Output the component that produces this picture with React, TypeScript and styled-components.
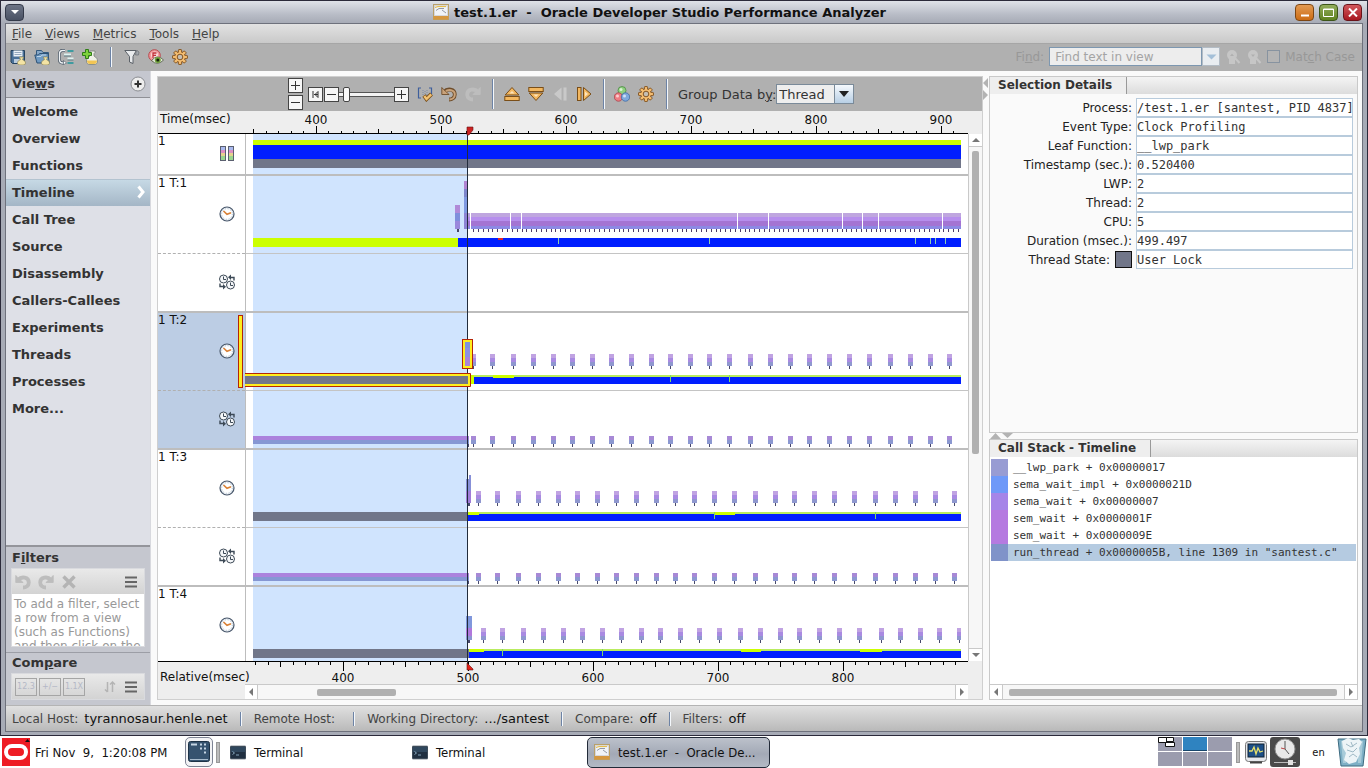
import React from "react";
import styled, { createGlobalStyle } from "styled-components";

const sans = `"DejaVu Sans", sans-serif`;
const mono = `"DejaVu Sans Mono", monospace`;
const condensed = `"DejaVu Sans Condensed", "DejaVu Sans", sans-serif`;

const GlobalStyle = createGlobalStyle`
  * { box-sizing: border-box; }
  body { margin: 0; background: #fff; font-family: ${sans}; font-size: 12px; color: #333; }
  button, input, select { font: inherit; color: inherit; margin: 0; }
  h1, h2, ul, dl { margin: 0; padding: 0; font-size: inherit; }
  ul { list-style: none; }
  svg { display: block; }
`;

/* ---------- window frame ---------- */

const Screen = styled.div`
  display: flex;
  flex-direction: column;
  height: 100vh;
  overflow: hidden;
`;

const Window = styled.div`
  flex: 1;
  min-height: 0;
  display: flex;
  flex-direction: column;
  background: #a7abb6;
  border: 1px solid #2b2a3a;
  padding-bottom: 3px;
`;

const TitleBar = styled.header`
  display: flex;
  align-items: center;
  justify-content: space-between;
  height: 22px;
  padding: 0 5px 0 4px;
  background: linear-gradient(#dfe2e8, #b9bdc7 60%, #a7abb6);
`;

const Title = styled.h1`
  display: flex;
  align-items: center;
  gap: 5px;
  font-size: 13px;
  font-weight: bold;
  color: #111;
  white-space: pre;
`;

const FrameButtons = styled.div`
  display: flex;
  gap: 5px;
`;

const FrameButton = styled.button<{ $tone: string; $edge: string }>`
  display: flex;
  align-items: center;
  justify-content: center;
  width: 19px;
  height: 17px;
  padding: 0;
  border: 1px solid ${(p) => p.$edge};
  border-radius: 4px;
  background: ${(p) => p.$tone};
`;

const Client = styled.div`
  flex: 1;
  min-height: 0;
  display: flex;
  flex-direction: column;
  margin: 0 4px;
  border: 1px solid #6e717c;
  background: #fafafa;
`;

const MenuBar = styled.nav`
  display: flex;
  align-items: center;
  gap: 13px;
  height: 20px;
  padding: 0 6px;
  background: linear-gradient(#e2e2e2, #c9c9c9);
  border-bottom: 1px solid #a6a6a6;
  color: #444;
`;

const MenuItem = styled.button`
  padding: 0;
  border: 0;
  background: none;
`;

const ToolBar = styled.div`
  display: flex;
  align-items: center;
  justify-content: space-between;
  height: 27px;
  padding: 0 7px 2px 4px;
  background: #b0b0b0;
`;

const ToolGroup = styled.div<{ $gap: number }>`
  display: flex;
  align-items: center;
  gap: ${(p) => p.$gap}px;
`;

const IconButton = styled.button`
  width: 16px;
  height: 16px;
  padding: 0;
  border: 0;
  background: none;
`;

const Divider = styled.span<{ $h: number }>`
  width: 2px;
  height: ${(p) => p.$h}px;
  border-left: 1px solid #6d83a5;
  background: #f4f8fc;
`;

/* ---------- search box ---------- */

const FindArea = styled.div`
  display: flex;
  align-items: center;
  gap: 5px;
  color: #989898;
`;

const Combo = styled.div`
  display: flex;
  height: 19px;
`;

const FindInput = styled.input`
  width: 153px;
  padding: 0 5px;
  border: 1px solid #7d97b0;
  background: #ededed;
  color: #989898;
  &::placeholder { color: #a4a4a4; opacity: 1; }
`;

const ComboButton = styled.button`
  display: flex;
  align-items: center;
  justify-content: center;
  width: 18px;
  padding: 0;
  border: 1px solid #b3bcc5;
  background: #e9edf1;
`;

const CheckLabel = styled.label`
  display: flex;
  align-items: center;
  gap: 5px;
`;

const CheckBox = styled.input`
  appearance: none;
  width: 13px;
  height: 13px;
  border: 1px solid #8793a0;
  background: #b4b4b4;
`;

/* ---------- body ---------- */

const Body = styled.main`
  flex: 1;
  min-height: 0;
  display: flex;
`;

const SideBar = styled.aside`
  display: flex;
  flex-direction: column;
  width: 145px;
  background: #c5c7cf;
  border-right: 1px solid #d8d9de;
  font-size: 13px;
`;

const SideHeading = styled.h2<{ $h: number }>`
  display: flex;
  align-items: center;
  justify-content: space-between;
  height: ${(p) => p.$h}px;
  padding: 0 4px 1px 6px;
  font-size: 13px;
  color: #333;
`;

const ViewList = styled.ul`
  flex: 1;
  min-height: 0;
  background: #dee0e7;
  border-top: 1px solid #8f9096;
  border-bottom: 2px solid #94959b;
`;

const ViewItem = styled.button<{ $active?: boolean }>`
  display: flex;
  align-items: center;
  justify-content: space-between;
  width: 100%;
  height: 27px;
  padding: 0 4px 2px 6px;
  border: 0;
  border-top: 1px solid ${(p) => (p.$active ? "#b3c3d0" : "transparent")};
  background: ${(p) => (p.$active ? "linear-gradient(#c6d9e5, #a4b6c6)" : "none")};
  font-weight: bold;
  text-align: left;
`;

const SideSection = styled.section`
  padding-bottom: 5px;
  & + & { border-top: 1px solid #9c9ea6; }
`;

const SideBox = styled.div`
  margin: 0 5px;
  border: 1px solid #d9dade;
  background: #fff;
`;

const SideTools = styled.div`
  display: flex;
  align-items: center;
  justify-content: space-between;
  height: 25px;
  padding: 0 5px 0 3px;
  background: linear-gradient(#e9e9e9, #d3d3d3);
`;

const FilterHelp = styled.p`
  margin: 0;
  height: 52px;
  padding: 3px 2px 0;
  overflow: hidden;
  font-size: 12px;
  line-height: 14px;
  color: #999;
`;

const FormatButton = styled.button`
  width: 22px;
  height: 18px;
  padding: 0;
  border: 1px solid #a5a5a5;
  background: none;
  font-size: 8px;
  color: #b4b8c6;
`;

/* ---------- timeline ---------- */

const Center = styled.section`
  flex: 1;
  min-width: 0;
  display: flex;
  flex-direction: column;
  margin: 5px 0 5px 6px;
  border: 1px solid #cfcfcf;
  background: #eee;
`;

const TimelineTools = styled.div`
  display: flex;
  align-items: center;
  height: 34px;
  padding-left: 130px;
  background: #b0b0b0;
  & > * { flex: none; }
`;

const Spacer = styled.span<{ $w: number }>`
  width: ${(p) => p.$w}px;
`;

const StepStack = styled.div`
  display: flex;
  flex-direction: column;
  gap: 2px;
`;

const StepButton = styled.button`
  display: flex;
  align-items: center;
  justify-content: center;
  width: 15px;
  height: 15px;
  padding: 0;
  border: 1px solid #444;
  background: #f6f6f6;
`;

const ZoomSlider = styled.input`
  appearance: none;
  width: 55px;
  height: 15px;
  background: linear-gradient(#555, #555) 0 5px / 100% 1px no-repeat,
    linear-gradient(#555, #555) 0 9px / 100% 1px no-repeat,
    linear-gradient(#f4f4f4, #f4f4f4) 0 6px / 100% 3px no-repeat;
  &::-webkit-slider-thumb {
    appearance: none;
    width: 7px;
    height: 15px;
    border: 1px solid #444;
    border-radius: 2px;
    background: #fafafa;
  }
`;

const GroupLabel = styled.label`
  display: flex;
  align-items: center;
  font-size: 13px;
`;

const SelectWrap = styled.span`
  position: relative;
  display: block;
`;

const Select = styled.select`
  appearance: none;
  display: block;
  width: 78px;
  height: 20px;
  padding: 0 2px;
  border: 1px solid #7a8a99;
  border-radius: 0;
  background: linear-gradient(#7a8a99, #7a8a99) right 18px top / 1px 100% no-repeat,
    linear-gradient(#f5f9fd, #b8cfe5) right / 18px 100% no-repeat, #eee;
`;

const SelectArrow = styled.svg`
  position: absolute;
  top: 7px;
  right: 5px;
  pointer-events: none;
`;

const Ruler = styled.div<{ $edge: "top" | "bottom" }>`
  display: flex;
  align-items: flex-start;
  height: 23px;
  margin-right: 14px;
  border-${(p) => p.$edge}: 1px solid #000;
  color: #111;
`;

const RulerLabel = styled.span<{ $top: number }>`
  width: 88px;
  padding: ${(p) => p.$top}px 0 0 2px;
  line-height: 17px;
  white-space: nowrap;
`;

const RulerScale = styled.svg`
  flex: 1;
  min-width: 0;
  height: 100%;
  font-family: ${sans};
  font-size: 12px;
`;

const TracksRow = styled.div`
  flex: 1;
  min-height: 0;
  display: flex;
`;

const TrackList = styled.div`
  position: relative;
  flex: 1;
  min-width: 0;
  background: #fff;
`;

const TrackClip = styled.div`
  height: 100%;
  overflow: hidden;
`;

const Overlay = styled.svg`
  position: absolute;
  top: 0;
  left: 88px;
  width: calc(100% - 88px);
  height: 100%;
  overflow: visible;
  pointer-events: none;
`;

const Track = styled.div<{ $h: number }>`
  display: flex;
  height: ${(p) => p.$h}px;
  border-bottom: 2px solid #bdbdbd;
`;

const Gutter = styled.div<{ $selected?: boolean }>`
  position: relative;
  display: flex;
  flex-direction: column;
  width: 88px;
  border-right: 1px solid #bdbdbd;
  background: ${(p) => (p.$selected ? "#bccde4" : "#fff")};
  color: #111;
`;

const GutterName = styled.span`
  position: absolute;
  top: 0;
  left: 0;
  line-height: 14px;
`;

const GutterCell = styled.div<{ $h: number; $rule?: boolean }>`
  display: flex;
  align-items: center;
  justify-content: flex-end;
  height: ${(p) => p.$h}px;
  padding: 0 10px 2px 0;
  border-bottom: ${(p) => (p.$rule ? "1px dashed #b0b0b0" : "0")};
`;

const Lanes = styled.div`
  flex: 1;
  min-width: 0;
`;

const Lane = styled.svg<{ $h: number; $rule?: boolean }>`
  width: 100%;
  height: ${(p) => p.$h}px;
  border-bottom: ${(p) => (p.$rule ? "1px solid #c4c4c4" : "0")};
`;

/* ---------- scroll bars ---------- */

const ScrollBar = styled.div<{ $dir: "row" | "column" }>`
  display: flex;
  flex: none;
  flex-direction: ${(p) => p.$dir};
  background: #f7f7f7;
  ${(p) => (p.$dir === "row" ? "height: 15px; border-top: 1px solid #c9c9c9;" : "width: 14px; border-left: 1px solid #c9c9c9;")}
`;

const ScrollArrow = styled.button<{ $edge: string }>`
  display: flex;
  align-items: center;
  justify-content: center;
  flex: none;
  min-width: 13px;
  min-height: 13px;
  padding: 0;
  border: 0;
  border-${(p) => p.$edge}: 1px solid #c9c9c9;
  background: #fff;
`;

const ScrollTrack = styled.div<{ $dir: "row" | "column"; $before: number }>`
  flex: 1;
  display: flex;
  flex-direction: ${(p) => p.$dir};
  align-items: center;
  ${(p) => (p.$dir === "row" ? `padding-left: ${p.$before}px;` : `padding-top: ${p.$before}px;`)}
`;

const ScrollThumb = styled.div<{ $w: string; $h: string }>`
  width: ${(p) => p.$w};
  height: ${(p) => p.$h};
  border-radius: 2px;
  background: #b0b0b0;
`;

const HScrollRow = styled.div`
  padding: 0 14px 0 87px;
`;

/* ---------- right column ---------- */

const Right = styled.div`
  display: flex;
  width: 379px;
  padding: 5px 4px 5px 0;
`;

const RightStack = styled.div`
  flex: 1;
  min-width: 0;
  display: flex;
  flex-direction: column;
`;

const SplitV = styled.div`
  width: 6px;
  padding-top: 2px;
`;

const SplitH = styled.div`
  display: flex;
  height: 6px;
  padding-left: 1px;
`;

const Panel = styled.section<{ $grow: number; $fill: string }>`
  flex: ${(p) => p.$grow} 1 0;
  min-height: 0;
  display: flex;
  flex-direction: column;
  border: 1px solid #c9c9c9;
  background: ${(p) => p.$fill};
`;

const PanelHead = styled.div`
  display: flex;
  height: 17px;
  background: linear-gradient(#f4f4f4, #dcdcdc);
`;

const PanelTab = styled.h2`
  padding: 0 14px 0 8px;
  border-right: 1px solid #999;
  background: #eee;
  font-size: 12px;
  line-height: 17px;
`;

const Details = styled.div`
  display: grid;
  grid-template-columns: 142px 1fr;
  column-gap: 4px;
  grid-auto-rows: 19px;
  padding: 4px 4px 0 0;
`;

const DetailLabel = styled.label`
  display: flex;
  align-items: center;
  justify-content: flex-end;
  gap: 5px;
  white-space: nowrap;
  color: #222;
`;

const Swatch = styled.span`
  width: 17px;
  height: 17px;
  border: 1px solid #111;
  background: #717689;
`;

const DetailField = styled.input`
  width: 100%;
  min-width: 0;
  padding: 0;
  border: 1px solid #b8cbdc;
  background: #fff;
  font-family: ${mono};
  font-size: 12px;
`;

const Stack = styled.ul`
  flex: 1;
  padding: 2px 1px;
`;

const Frame = styled.li<{ $color: string; $active?: boolean }>`
  height: 17px;
  padding-left: 5px;
  border-left: 17px solid ${(p) => p.$color};
  background: ${(p) => (p.$active ? "#b5cbe1" : "#fff")};
  font-family: ${mono};
  font-size: 11px;
  line-height: 17px;
  white-space: nowrap;
`;

/* ---------- status bar and taskbar ---------- */

const StatusBar = styled.footer`
  display: flex;
  align-items: center;
  gap: 12px;
  height: 26px;
  padding: 0 6px;
  border-top: 1px solid #b4b4b4;
  background: linear-gradient(#e0e0e0, #b9b9b9);
`;

const StatusItem = styled.span`
  display: flex;
  align-items: baseline;
  gap: 6px;
  color: #444;
`;

const StatusValue = styled.span`
  font-size: 13px;
  color: #111;
`;

const TaskBar = styled.div`
  display: flex;
  align-items: center;
  justify-content: space-between;
  height: 32px;
  padding: 0 1px 0 2px;
  background: #fff;
  color: #111;
  font-family: ${condensed};
  font-size: 13px;
  white-space: pre;
`;

const TaskSide = styled.div`
  display: flex;
  align-items: center;
  & > * { flex: none; }
`;

const Logo = styled.span`
  margin-right: 5px;
`;

const Clock = styled.time`
  width: 150px;
`;

const DesktopButton = styled.button`
  display: flex;
  align-items: center;
  justify-content: center;
  width: 28px;
  height: 30px;
  padding: 0;
  border: 1px solid #7e8494;
  border-radius: 5px;
  background: #f3f3f5;
`;

const Grip = styled.span`
  width: 4px;
  height: 21px;
  border: 1px solid #999;
  background: #bbb;
`;

const Task = styled.button<{ $active?: boolean }>`
  display: flex;
  align-items: center;
  gap: 8px;
  width: ${(p) => (p.$active ? 183 : 182)}px;
  height: 31px;
  padding: 0 6px;
  border: 1px solid ${(p) => (p.$active ? "#222a38" : "transparent")};
  border-radius: 5px;
  background: ${(p) => (p.$active ? "linear-gradient(#bcc1cb, #a3a9b6 55%, #b4bac5)" : "none")};
  white-space: pre;
`;

const Locale = styled.span`
  width: 37px;
  text-align: center;
  font-size: 11px;
`;

/* ---------- icons ---------- */

const I = ({ children, s = 16 }: { children: React.ReactNode; s?: number }) => (
  <svg width={s} height={s} viewBox="0 0 16 16" aria-hidden="true">{children}</svg>
);

const Flask = () => (
  <path d="M9.500 8h4v1l-.8.8v1c2 .8 2.800 1.800 2.800 3 0 1.500-1 2.200-2.500 2.200h-3c-1.500 0-2.500-.7-2.500-2.200 0-1.200.8-2.200 2.800-3v-1l-.8-.8z" fill="#f3e3a4" stroke="#8c8557" strokeWidth=".7" />
);

const AppIcon = () => (
  <I>
    <rect x=".5" y=".5" width="15" height="15" fill="#e3dfd2" stroke="#b9a06a" />
    <rect x="1.500" y="2" width="13" height="9.500" fill="#f1f3f7" stroke="#c9ccd6" strokeWidth=".6" />
    <rect x=".5" y="12" width="15" height="3.500" fill="#d6973f" />
    <path d="M3 6.500l3-2h5M9 6l4 3" fill="none" stroke="#7a8290" strokeWidth=".8" />
    <path d="M2 3.500 5 2.600h8" stroke="#e5b93c" fill="none" />
  </I>
);

const SaveIcon = () => (
  <I>
    <path d="M1 1.500h13.500v13H2.500L1 13z" fill="#4a7199" stroke="#24425f" />
    <rect x="3.500" y="1.500" width="9" height="6" fill="#eaf1f7" />
    <path d="M4.500 3.500h7M4.500 5.500h7" stroke="#7d97b0" strokeWidth=".8" />
    <path d="M4 10h6v4H4z" fill="#b9cbdc" />
    <Flask />
  </I>
);

const OpenIcon = () => (
  <I>
    <path d="M2.500 7V1.500h5L9 3.500h5.500v4" fill="#86a7c7" stroke="#355a7e" />
    <path d="M.8 6h3.700l1-1.500H14L15.200 14H3z" fill="#6f9ac2" stroke="#2e5276" />
    <path d="M3 7.500h4l1-1.500h4" stroke="#bdd3e7" fill="none" />
    <Flask />
  </I>
);

const CompareIcon = () => (
  <I>
    <path d="M7 1.500H4.500Q1.500 1.500 1.500 5v5.500q0 3.500 3 3.500H6" fill="none" stroke="#455260" strokeWidth="2.800" />
    <path d="M7 1.500H4.500Q1.500 1.500 1.500 5v5.500q0 3.500 3 3.500H6" fill="none" stroke="#eef2f5" strokeWidth="1.400" />
    <path d="M5.500 11.500 8.500 14l-3 1.700z" fill="#fff" stroke="#455260" strokeWidth=".6" />
    <path d="M9.500 2h6M9.500 14h6" stroke="#3f9ba0" strokeWidth="2" />
    <path d="M6 5.500h7M9.500 9.500h6" stroke="#dff1f0" strokeWidth="2" />
    <path d="M6 7h7M9.500 11h6" stroke="#49727c" strokeWidth=".8" />
  </I>
);

const AddIcon = () => (
  <I>
    <path d="M8 2h5v1.500l-1 1V7c2.500 1.500 3.500 3 3.500 5 0 2.500-1.500 3.500-3.500 3.500H8c-2 0-3.500-1-3.500-3.500 0-2 1-3.500 3.500-5z" fill="#eef0e6" stroke="#7b8078" strokeWidth=".8" />
    <path d="M5 11.500h10c0 2.500-1 3.500-3 3.500H8c-2 0-3-1-3-3.500z" fill="#f2c553" />
    <path d="M3.500.5h3v3h3v3h-3v3h-3v-3h-3v-3h3z" fill="#7ed23c" stroke="#2f7d16" />
  </I>
);

const FilterIcon = () => (
  <I>
    <path d="M.8 1.500h11.500L9 7.500v7l-3.500-1.500V7.500z" fill="#e9ebed" stroke="#5b6168" />
    <path d="M12 3l1-1.500L15 3l-.5 3h-3z" fill="#a0a5ab" stroke="#6b7076" strokeWidth=".7" />
  </I>
);

const EyeIcon = () => (
  <I>
    <circle cx="6.500" cy="6.500" r="5.800" fill="#f29a9d" stroke="#b8474c" />
    <circle cx="6.500" cy="6" r="3.500" fill="#f9d7d8" />
    <path d="M5 9V4h3.500M5 6.300h3" fill="none" stroke="#c22f38" strokeWidth="1.300" />
    <path d="M3.500 11.500Q9.500 4.500 15.500 11q-6 6.500-12 .5z" fill="#e4e9db" stroke="#4d5b41" strokeWidth=".8" />
    <circle cx="9.800" cy="11" r="3" fill="#6fa03a" />
    <circle cx="9.800" cy="11" r="1.500" fill="#14200c" />
  </I>
);

const TEETH = [0, 45, 90, 135, 180, 225, 270, 315];

const GearIcon = () => (
  <I>
    {TEETH.map((a) => (
      <rect key={a} x="6.400" y=".6" width="3.200" height="4" rx=".6" fill="#f3bd72" stroke="#7b4a17" strokeWidth=".9" transform={`rotate(${a} 8 8)`} />
    ))}
    <circle cx="8" cy="8" r="5.300" fill="#f3bd72" stroke="#7b4a17" strokeWidth=".9" />
    {TEETH.map((a) => (
      <rect key={a} x="6.900" y="1.800" width="2.200" height="3" fill="#f3bd72" transform={`rotate(${a} 8 8)`} />
    ))}
    <circle cx="8" cy="8" r="2.800" fill="#c4beb4" stroke="#7b4a17" strokeWidth=".9" />
  </I>
);

const UndoIcon = ({ muted, flip }: { muted?: boolean; flip?: boolean }) => (
  <I>
    <g transform={flip ? "matrix(-1 0 0 1 16 0)" : undefined} fill="none">
      <path d="M3 6C6.500 2 13.800 3 13.800 8.500c0 3.500-2.800 5-5.800 5" stroke={muted ? "#bdbdbd" : "#6e4d2b"} strokeWidth="3.800" />
      {!muted && <path d="M4 6C7 3 13.800 3.500 13.800 8.500c0 3.300-2.800 5-5.400 5" stroke="#c9a27a" strokeWidth="2" />}
      <path d="M.8 1.500v7H8L5.500 6l-3-2.600z" fill={muted ? "#bdbdbd" : "#c9a27a"} stroke={muted ? "#bdbdbd" : "#6e4d2b"} strokeWidth=".9" />
    </g>
  </I>
);

const CrossIcon = () => (
  <I><path d="M2.500 2.500l11 11M13.500 2.500l-11 11" stroke="#b4b4b4" strokeWidth="3.400" /></I>
);

const MenuIcon = () => (
  <I><path d="M2 3.500h12M2 8h12M2 12.500h12" stroke="#666" strokeWidth="2" /></I>
);

const FitIcon = () => (
  <I>
    <path d="M4 2H1.500v10H4M12 2h2.500v6" fill="none" stroke="#3e5f9c" strokeWidth="1.200" />
    <path d="M6 4v5M8 5v5M10 4v5" stroke="#7d8aa5" strokeDasharray="1 1" />
    <path d="M7 9.500 9.500 13 14.500 8" fill="none" stroke="#7a4e18" strokeWidth="4" />
    <path d="M7.300 10 9.500 13 14.200 8.300" fill="none" stroke="#f2c273" strokeWidth="2.400" />
  </I>
);

const amber = { fill: "#f3b75f", stroke: "#7a4e18", strokeWidth: 1 };

const UpIcon = () => (
  <I>
    <path d="M8 1.500 14.800 9H1.200z" {...amber} />
    <path d="M8 5 10.500 7.500h-5z" fill="#fbe3bd" />
    <rect x=".8" y="10.500" width="14.400" height="4" {...amber} />
  </I>
);

const DownIcon = () => (
  <I>
    <rect x=".8" y="1.500" width="14.400" height="4" {...amber} />
    <path d="M8 14.500 14.800 7H1.200z" {...amber} />
    <path d="M8 11 10.500 8.500h-5z" fill="#fbe3bd" />
  </I>
);

const BackIcon = () => (
  <I>
    <path d="M9.500 1.500v13L2 8z" fill="#c9c9c9" />
    <rect x="11.500" y="1.500" width="3" height="13" fill="#c9c9c9" />
  </I>
);

const ForwardIcon = () => (
  <I>
    <rect x="1.500" y="1.500" width="3.500" height="13" {...amber} />
    <path d="M7.500 1.500v13L15 8z" {...amber} />
    <path d="M9 5.500v5L12 8z" fill="#fbe3bd" />
  </I>
);

const ColorsIcon = () => (
  <I>
    <circle cx="8" cy="4.500" r="4" fill="#8fd07f" stroke="#4c8a45" strokeWidth=".8" />
    <circle cx="4.500" cy="11" r="4.200" fill="#ef7d83" stroke="#a6454d" strokeWidth=".8" />
    <circle cx="11.500" cy="11" r="4.200" fill="#7fa9dd" stroke="#3f6aa3" strokeWidth=".8" />
    <circle cx="7" cy="3.500" r="1.500" fill="#d8f2d2" />
    <circle cx="3.500" cy="10" r="1.500" fill="#fbd0d2" />
    <circle cx="10.500" cy="10" r="1.500" fill="#d0e0f6" />
  </I>
);

const SearchIcon = ({ flip }: { flip?: boolean }) => (
  <I>
    <circle cx="7" cy="6" r="5" fill="#c6c6c6" />
    <path d="M5 9h4v5H5zM9.500 8.500l5 5.500" stroke="#c6c6c6" strokeWidth="2" fill="#c6c6c6" />
    <path d={flip ? "M5 5.500h4L7 8z" : "M5 7h4L7 4.500z"} fill="#b0b0b0" />
  </I>
);

const PlusIcon = () => (
  <I>
    <circle cx="8" cy="8" r="7" fill="#eee" stroke="#8b8d92" />
    <path d="M8 4.500v7M4.500 8h7" stroke="#333" strokeWidth="2" />
  </I>
);

const ClockIcon = () => (
  <I>
    <circle cx="8" cy="8" r="7" fill="#eef2f6" stroke="#47566a" strokeWidth="1.200" />
    <circle cx="8" cy="8" r="5.300" fill="#fff" stroke="#a9bccd" strokeDasharray="1 1.770" />
    <path d="M4.500 5 8 8.300 12 6.700" fill="none" stroke="#d98238" strokeWidth="1.700" />
  </I>
);

const SwitchIcon = () => (
  <I>
    <circle cx="4.500" cy="5" r="4" fill="#f6f8fa" stroke="#3c4956" />
    <circle cx="11.500" cy="11" r="4" fill="#f6f8fa" stroke="#3c4956" />
    <path d="M4.500 2.500V5.500H7M11.500 8.500v3H14" fill="none" stroke="#3c4956" />
    <path d="M15 6.500V3.500H11.500" fill="none" stroke="#3c4956" strokeWidth="1.400" />
    <path d="M9 3.200 12 .5v5.500z" fill="#3c4956" />
    <path d="M1 9.500v3H4" fill="none" stroke="#3c4956" strokeWidth="1.400" />
    <path d="M7 12.800 4 10v5.500z" fill="#3c4956" />
  </I>
);

const BarsIcon = () => (
  <I>
    {[1, 9].map((x) => (
      <g key={x}>
        <rect x={x} y="1" width="5" height="4" fill="#a9b9ef" />
        <rect x={x} y="5" width="5" height="3" fill="#dd8fc4" />
        <rect x={x} y="8" width="5" height="3" fill="#e6d28e" />
        <rect x={x} y="11" width="5" height="4" fill="#9ad68e" />
        <rect x={x + 0.5} y="1.500" width="5" height="14" fill="none" stroke="#5b6070" />
      </g>
    ))}
  </I>
);

const Tri = ({ d, fill = "#777", w = 8, h = 8 }: { d: string; fill?: string; w?: number; h?: number }) => (
  <svg width={w} height={h} viewBox="0 0 8 8" aria-hidden="true"><path d={d} fill={fill} /></svg>
);

const TRI = { up: "M0 6 4 2 8 6z", down: "M0 2h8L4 6z", left: "M6 0v8L2 4z", right: "M2 0v8l4-4z" };

const Sign = ({ d }: { d: string }) => (
  <svg width="11" height="11" viewBox="0 0 11 11" aria-hidden="true"><path d={d} fill="none" stroke="#333" /></svg>
);

const PLUS = "M5.500 1v9M1 5.500h9";
const MINUS = "M1 5.500h9";

const TerminalIcon = () => (
  <I>
    <rect x="0" y="2" width="16" height="13" rx="1" fill="#1f2f40" stroke="#6c7782" strokeWidth=".8" />
    <rect x="1" y="3" width="14" height="5" fill="#2f475d" />
    <path d="M2.500 7.500l2 1.500-2 1.500M6 11h3" fill="none" stroke="#9fc1d8" strokeWidth=".8" />
  </I>
);

/* ---------- timeline data ---------- */

const LANE_START = 7;
const LANE_END = 715;
const CURSOR = 221;

const LIME = "#ccff00";
const BLUE = "#001eff";
const SLATE = "#717689";

const T2 = [225, 244, 265, 285, 305, 324, 344, 363, 383, 403, 422, 442, 461, 481, 502, 522, 542, 561, 581, 601, 621, 642, 662, 682, 701];
const T3 = [230, 249, 270, 290, 310, 329, 349, 368, 388, 408, 427, 446, 466, 486, 507, 527, 546, 566, 586, 606, 627, 647, 667, 687, 706];
const T4 = [235, 254, 275, 295, 315, 334, 354, 373, 393, 412, 432, 451, 471, 492, 512, 532, 551, 571, 591, 611, 633, 652, 672, 691, 711];

const Selection = () => <rect x={LANE_START} y="0" width={CURSOR - LANE_START} height="100%" fill="#d0e4fe" />;

type Seg = { x: number; y: number; w: number; h: number; c: string };

const Segs = ({ items }: { items: Seg[] }) => (
  <>{items.map((s, i) => <rect key={i} x={s.x} y={s.y} width={s.w} height={s.h} fill={s.c} />)}</>
);

const Samples = ({ xs, tops }: { xs: number[]; tops: string[] }) => {
  const y = 53 - tops.length * 4;
  return (
    <>
      {xs.map((x) => {
        const w = Math.min(5, LANE_END - x);
        return (
          <g key={x}>
            {tops.map((c, i) => <rect key={i} x={x} y={y + i * 4} width={w} height="4" fill={c} />)}
            <rect x={x + 2} y="53" width="1" height="3" fill="#47496b" />
          </g>
        );
      })}
    </>
  );
};

const StateBar = ({ from, lime, marks, start }: { from: number; lime: [number, number][]; marks: number[]; start?: number }) => (
  <>
    {start !== undefined && <rect x={start} y="62" width={from - start} height="9" fill={SLATE} />}
    <rect x={from} y="62" width={LANE_END - from} height="9" fill={BLUE} />
    <rect x={from} y="62" width={LANE_END - from} height="2" fill="#b9ec5e" />
    {lime.map(([x, w]) => <rect key={x} x={x} y="62" width={w} height="3" fill={LIME} />)}
    {marks.map((x) => <rect key={x} x={x} y="62" width="1" height="7" fill="#7fd66a" />)}
  </>
);

const SwitchLane = ({ xs }: { xs: number[] }) => (
  <Lane $h={57}>
    <Selection />
    <rect x={LANE_START} y="45" width={CURSOR - LANE_START + 2} height="4" fill="#ab82dd" />
    <rect x={LANE_START} y="49" width={CURSOR - LANE_START + 2} height="4" fill="#8697d3" />
    <rect x="222" y="53" width="1" height="3" fill="#47496b" />
    <Samples xs={xs} tops={["#a789d6", "#8b98d0"]} />
  </Lane>
);

const THREAD1_TICKS = Array.from({ length: 101 }, (_, i) => Math.round(227 + i * 4.85));
const THREAD1_GAPS = [224, 264, 275, 491, 522, 596, 616, 632, 696];
const THREAD1_MARKS = [312, 463, 669, 684, 689, 699];

const ThreadGutter = ({ name, selected }: { name: string; selected?: boolean }) => (
  <Gutter $selected={selected}>
    <GutterName>{name}</GutterName>
    <GutterCell $h={78} $rule><ClockIcon /></GutterCell>
    <GutterCell $h={57}><SwitchIcon /></GutterCell>
  </Gutter>
);

const ticks = (zero: number, from: number) => {
  const out: { x: number; n: number }[] = [];
  for (let n = -8; n <= 60; n++) {
    const x = Math.floor(zero + n * 12.5);
    if (x >= from && x <= 714) out.push({ x, n });
  }
  return out;
};

const size = (n: number, sizes: [number, number, number]) => (n % 10 === 0 ? sizes[0] : n % 5 === 0 ? sizes[1] : sizes[2]);

const VIEWS = ["Welcome", "Overview", "Functions", "Timeline", "Call Tree", "Source", "Disassembly", "Callers-Callees", "Experiments", "Threads", "Processes", "More..."];

const DETAILS = [
  ["Process:", "/test.1.er [santest, PID 4837]"],
  ["Event Type:", "Clock Profiling"],
  ["Leaf Function:", "__lwp_park"],
  ["Timestamp (sec.):", "0.520400"],
  ["LWP:", "2"],
  ["Thread:", "2"],
  ["CPU:", "5"],
  ["Duration (msec.):", "499.497"],
  ["Thread State:", "User Lock"],
];

const FRAMES = [
  ["__lwp_park + 0x00000017", "#989cd3"],
  ["sema_wait_impl + 0x0000021D", "#6f99f8"],
  ["sema_wait + 0x00000007", "#a585e8"],
  ["sem_wait + 0x0000001F", "#b57ae0"],
  ["sem_wait + 0x0000009E", "#b57ae0"],
  ['run_thread + 0x0000005B, line 1309 in "santest.c"', "#8093c9"],
];

const STATUS = [
  ["Local Host:", "tyrannosaur.henle.net"],
  ["Remote Host:", ""],
  ["Working Directory:", ".../santest"],
  ["Compare:", "off"],
  ["Filters:", "off"],
];

const SAMPLE_TOPS = ["#c0a3e2", "#a98ae2", "#8f97cf"];

export default function App() {
  return (
    <Screen>
      <GlobalStyle />
      <Window>
        <TitleBar>
          <FrameButton $tone="linear-gradient(#6c7486, #4a5264)" $edge="#343a4a" aria-label="Window menu">
            <Tri d={TRI.down} fill="#fff" />
          </FrameButton>
          <Title><AppIcon />{"test.1.er  -  Oracle Developer Studio Performance Analyzer"}</Title>
          <FrameButtons>
            <FrameButton $tone="linear-gradient(#e39a52, #cc6c14)" $edge="#7d4613" aria-label="Minimize">
              <svg width="10" height="9"><path d="M1 7.500h8" stroke="#fff" strokeWidth="2" /></svg>
            </FrameButton>
            <FrameButton $tone="linear-gradient(#93ad5c, #5f8220)" $edge="#3d5518" aria-label="Maximize">
              <svg width="11" height="9"><path d="M.5 1h10v7.500H.5zM0 1.500h11" fill="none" stroke="#fff" /></svg>
            </FrameButton>
            <FrameButton $tone="linear-gradient(#d1585c, #a81820)" $edge="#6a1319" aria-label="Close">
              <svg width="10" height="9"><path d="M1 .5l8 8M9 .5l-8 8" stroke="#fff" strokeWidth="2" /></svg>
            </FrameButton>
          </FrameButtons>
        </TitleBar>

        <Client>
          <MenuBar>
            <MenuItem><u>F</u>ile</MenuItem>
            <MenuItem><u>V</u>iews</MenuItem>
            <MenuItem><u>M</u>etrics</MenuItem>
            <MenuItem><u>T</u>ools</MenuItem>
            <MenuItem><u>H</u>elp</MenuItem>
          </MenuBar>

          <ToolBar>
            <ToolGroup $gap={12}>
              <ToolGroup $gap={8}>
                <IconButton aria-label="Save"><SaveIcon /></IconButton>
                <IconButton aria-label="Open"><OpenIcon /></IconButton>
                <IconButton aria-label="Compare"><CompareIcon /></IconButton>
                <IconButton aria-label="Add experiment"><AddIcon /></IconButton>
              </ToolGroup>
              <Divider $h={20} />
              <ToolGroup $gap={8}>
                <IconButton aria-label="Filter"><FilterIcon /></IconButton>
                <IconButton aria-label="Show functions"><EyeIcon /></IconButton>
                <IconButton aria-label="Settings"><GearIcon /></IconButton>
              </ToolGroup>
            </ToolGroup>
            <FindArea>
              <label htmlFor="find">Fi<u>n</u>d:</label>
              <Combo>
                <FindInput id="find" placeholder="Find text in view" disabled />
                <ComboButton disabled aria-label="Find history"><Tri d={TRI.down} w={11} h={10} fill="#a3bfd8" /></ComboButton>
              </Combo>
              <IconButton disabled aria-label="Find previous"><SearchIcon /></IconButton>
              <IconButton disabled aria-label="Find next"><SearchIcon flip /></IconButton>
              <CheckLabel><CheckBox type="checkbox" disabled /><span>Mat<u>c</u>h Case</span></CheckLabel>
            </FindArea>
          </ToolBar>

          <Body>
            <SideBar>
              <SideHeading $h={26}><span>Vie<u>w</u>s</span><IconButton aria-label="Add view"><PlusIcon /></IconButton></SideHeading>
              <ViewList>
                {VIEWS.map((v) => (
                  <li key={v}>
                    <ViewItem $active={v === "Timeline"}>
                      {v}
                      {v === "Timeline" && <svg width="10" height="14"><path d="M2.500 1.500 7 7l-4.500 5.500" fill="none" stroke="#fff" strokeWidth="3" /></svg>}
                    </ViewItem>
                  </li>
                ))}
              </ViewList>
              <SideSection>
                <SideHeading $h={21}><span>F<u>i</u>lters</span></SideHeading>
                <SideBox>
                  <SideTools>
                    <ToolGroup $gap={7}>
                      <IconButton aria-label="Undo filter"><UndoIcon muted /></IconButton>
                      <IconButton aria-label="Redo filter"><UndoIcon muted flip /></IconButton>
                      <IconButton aria-label="Remove filters"><CrossIcon /></IconButton>
                    </ToolGroup>
                    <IconButton aria-label="Filter menu"><MenuIcon /></IconButton>
                  </SideTools>
                  <FilterHelp>To add a filter, select a row from a view (such as Functions) and then click on the</FilterHelp>
                </SideBox>
              </SideSection>
              <SideSection>
                <SideHeading $h={20}><span>Com<u>p</u>are</span></SideHeading>
                <SideBox>
                  <SideTools>
                    <ToolGroup $gap={2}>
                      <FormatButton>12.3</FormatButton>
                      <FormatButton>+/−</FormatButton>
                      <FormatButton>1.1X</FormatButton>
                    </ToolGroup>
                    <ToolGroup $gap={5}>
                      <I><path d="M5.500 3v10M3 10.500 5.500 13M10.500 13V3M8 5.500 10.500 3 13 5.500" fill="none" stroke="#b4b4b4" strokeWidth="1.500" /></I>
                      <IconButton aria-label="Compare menu"><MenuIcon /></IconButton>
                    </ToolGroup>
                  </SideTools>
                </SideBox>
              </SideSection>
            </SideBar>

            <Center>
              <TimelineTools>
                <StepStack>
                  <StepButton aria-label="Taller rows"><Sign d={PLUS} /></StepButton>
                  <StepButton aria-label="Shorter rows"><Sign d={MINUS} /></StepButton>
                </StepStack>
                <Spacer $w={5} />
                <StepButton aria-label="Zoom to start"><Sign d="M3 2v7M4 5.500h4M8 2.500 5 5.500l3 3z" /></StepButton>
                <Spacer $w={1} />
                <StepButton aria-label="Zoom out"><Sign d={MINUS} /></StepButton>
                <ZoomSlider type="range" min={0} max={100} defaultValue={8} aria-label="Zoom" />
                <StepButton aria-label="Zoom in"><Sign d={PLUS} /></StepButton>
                <Spacer $w={8} />
                <ToolGroup $gap={8}>
                  <IconButton aria-label="Fit"><FitIcon /></IconButton>
                  <IconButton aria-label="Undo zoom"><UndoIcon /></IconButton>
                  <IconButton aria-label="Redo zoom" disabled><UndoIcon muted flip /></IconButton>
                </ToolGroup>
                <Spacer $w={11} />
                <Divider $h={30} />
                <Spacer $w={10} />
                <ToolGroup $gap={8}>
                  <IconButton aria-label="Previous row"><UpIcon /></IconButton>
                  <IconButton aria-label="Next row"><DownIcon /></IconButton>
                  <IconButton aria-label="Previous event" disabled><BackIcon /></IconButton>
                  <IconButton aria-label="Next event"><ForwardIcon /></IconButton>
                </ToolGroup>
                <Spacer $w={11} />
                <Divider $h={30} />
                <Spacer $w={9} />
                <ToolGroup $gap={8}>
                  <IconButton aria-label="Function colors"><ColorsIcon /></IconButton>
                  <IconButton aria-label="Timeline settings"><GearIcon /></IconButton>
                </ToolGroup>
                <Spacer $w={12} />
                <Divider $h={30} />
                <Spacer $w={10} />
                <GroupLabel>
                  <span>Group Data b<u>y</u>:</span>
                  <SelectWrap>
                    <Select defaultValue="Thread">
                      <option>Thread</option>
                      <option>LWP</option>
                      <option>CPU</option>
                    </Select>
                    <SelectArrow width="10" height="6"><path d="M0 0h10L5 6z" fill="#222" /></SelectArrow>
                  </SelectWrap>
                </GroupLabel>
              </TimelineTools>

              <Ruler $edge="bottom">
                <RulerLabel $top={0}>Time(msec)</RulerLabel>
                <RulerScale>
                  {ticks(70, 7).map(({ x, n }) => {
                    const h = size(n, [7, 4, 2]);
                    return <rect key={n} x={x} y={22 - h} width="1" height={h} fill="#000" />;
                  })}
                  {[400, 500, 600, 700, 800, 900].map((t, i) => (
                    <text key={t} x={70 + i * 125} y="13" textAnchor="middle" fill="#111">{t}</text>
                  ))}
                </RulerScale>
              </Ruler>

              <TracksRow>
                <TrackList>
                  <TrackClip>
                    <Track $h={42}>
                      <Gutter>
                        <GutterName>1</GutterName>
                        <GutterCell $h={40}><BarsIcon /></GutterCell>
                      </Gutter>
                      <Lanes>
                        <Lane $h={40}>
                          <Selection />
                          <rect x={LANE_START} y="6" width="708" height="5" fill={LIME} />
                          <rect x={LANE_START} y="11" width="708" height="14" fill={BLUE} />
                          <rect x={LANE_START} y="25" width="708" height="9" fill={SLATE} />
                        </Lane>
                      </Lanes>
                    </Track>

                    <Track $h={137}>
                      <ThreadGutter name="1 T:1" />
                      <Lanes>
                        <Lane $h={78} $rule>
                          <Selection />
                          <Segs items={[
                            { x: 209, y: 29, w: 5, h: 8, c: "#b08ad8" },
                            { x: 209, y: 37, w: 5, h: 8, c: "#7f8fdc" },
                            { x: 209, y: 45, w: 5, h: 8, c: "#9a88dc" },
                            { x: 211, y: 53, w: 2, h: 3, c: "#47496b" },
                            { x: 218, y: 5, w: 4, h: 8, c: "#b184d2" },
                            { x: 218, y: 13, w: 4, h: 8, c: "#7d86cc" },
                            { x: 218, y: 21, w: 4, h: 16, c: "#7f9ae2" },
                            { x: 218, y: 37, w: 4, h: 16, c: "#8d84d4" },
                            { x: 222, y: 37, w: 493, h: 4, c: "#bfa6df" },
                            { x: 222, y: 41, w: 493, h: 4, c: "#b68eed" },
                            { x: 222, y: 45, w: 493, h: 5, c: "#a474d3" },
                            { x: 222, y: 50, w: 493, h: 3, c: "#8c89e4" },
                          ]} />
                          {THREAD1_GAPS.map((x) => <rect key={x} x={x} y="37" width="1" height="16" fill="#fff" />)}
                          {THREAD1_TICKS.map((x) => <rect key={x} x={x} y="53" width="1" height="3" fill="#4d3a66" />)}
                          <rect x={LANE_START} y="62" width="205" height="9" fill={LIME} />
                          <rect x="212" y="62" width="503" height="9" fill={BLUE} />
                          <rect x="252" y="62" width="5" height="2" fill="#e3242b" />
                          {THREAD1_MARKS.map((x) => <rect key={x} x={x} y="62" width="1" height="6" fill="#8fd0b0" />)}
                        </Lane>
                        <Lane $h={57}><Selection /></Lane>
                      </Lanes>
                    </Track>

                    <Track $h={137}>
                      <ThreadGutter name="1 T:2" selected />
                      <Lanes>
                        <Lane $h={78} $rule>
                          <Selection />
                          <Samples xs={T2} tops={SAMPLE_TOPS} />
                          <rect x="225" y="62" width="3" height="9" fill={LIME} />
                          <StateBar from={228} lime={[[247, 21]]} marks={[424, 483]} />
                        </Lane>
                        <SwitchLane xs={T2} />
                      </Lanes>
                    </Track>

                    <Track $h={137}>
                      <ThreadGutter name="1 T:3" />
                      <Lanes>
                        <Lane $h={78} $rule>
                          <Selection />
                          <Segs items={[
                            { x: 220, y: 29, w: 5, h: 12, c: "#8790d8" },
                            { x: 223, y: 25, w: 2, h: 6, c: "#8790d8" },
                            { x: 220, y: 41, w: 5, h: 12, c: "#a07cd8" },
                            { x: 222, y: 53, w: 2, h: 3, c: "#47496b" },
                          ]} />
                          <Samples xs={T3} tops={SAMPLE_TOPS} />
                          <StateBar start={LANE_START} from={222} lime={[[222, 11], [468, 21]]} marks={[468, 629]} />
                        </Lane>
                        <SwitchLane xs={T3} />
                      </Lanes>
                    </Track>

                    <Track $h={137}>
                      <ThreadGutter name="1 T:4" />
                      <Lanes>
                        <Lane $h={78} $rule>
                          <Selection />
                          <Segs items={[
                            { x: 220, y: 29, w: 6, h: 12, c: "#8097dc" },
                            { x: 220, y: 41, w: 6, h: 8, c: "#b078dc" },
                            { x: 220, y: 49, w: 6, h: 4, c: "#8d96d2" },
                            { x: 222, y: 53, w: 2, h: 3, c: "#47496b" },
                          ]} />
                          <Samples xs={T4} tops={SAMPLE_TOPS} />
                          <StateBar start={LANE_START} from={223} lime={[[223, 15], [495, 20], [614, 22]]} marks={[256, 356]} />
                        </Lane>
                        <Lane $h={57}><Selection /></Lane>
                      </Lanes>
                    </Track>
                  </TrackClip>
                  <Overlay aria-hidden="true">
                    <rect x={CURSOR} y="-7" width="1" height="100%" fill="#222c3c" />
                    <rect x={CURSOR} y="8" width="1" height="100%" fill="#222c3c" />
                    <path d={`M${CURSOR} -7h6v3l-4 5h-2z`} fill="#c22" stroke="#611" strokeWidth=".6" />
                    <path d="M221 529l6 6v1h-6z" fill="#e32219" stroke="#611" strokeWidth=".6" />
                    <path d="M-1 239.500h225.500v13H-1" fill="none" stroke="#b32407" />
                    <path d="M-1 241h224v10H-1" fill="none" stroke="#ffee1c" strokeWidth="2" />
                    <rect x="-1" y="242" width="223" height="8" fill={SLATE} />
                    <rect x="216.500" y="205.500" width="10" height="29" fill="#ffee1c" stroke="#b32407" />
                    <rect x="219" y="208" width="5" height="6" fill="#7f92dc" />
                    <rect x="219" y="214" width="5" height="9" fill="#8d8fe2" />
                    <rect x="219" y="223" width="5" height="9" fill="#a983d8" />
                    <rect x="-7.500" y="181.500" width="4" height="72" fill="#ffee1c" stroke="#b32407" />
                  </Overlay>
                </TrackList>
                <ScrollBar $dir="column">
                  <ScrollArrow $edge="bottom" aria-label="Scroll up"><Tri d={TRI.up} /></ScrollArrow>
                  <ScrollTrack $dir="column" $before={4}><ScrollThumb $w="7px" $h="61%" /></ScrollTrack>
                  <ScrollArrow $edge="top" aria-label="Scroll down"><Tri d={TRI.down} /></ScrollArrow>
                </ScrollBar>
              </TracksRow>

              <Ruler $edge="top">
                <RulerLabel $top={7}>Relative(msec)</RulerLabel>
                <RulerScale>
                  {ticks(97, 9).map(({ x, n }) => (
                    <rect key={n} x={x} y="0" width="1" height={size(n, [9, 5, 3])} fill="#000" />
                  ))}
                  {[400, 500, 600, 700, 800].map((t, i) => (
                    <text key={t} x={97 + i * 125} y="20" textAnchor="middle" fill="#111">{t}</text>
                  ))}
                </RulerScale>
              </Ruler>
              <HScrollRow>
                <ScrollBar $dir="row">
                  <ScrollArrow $edge="right" aria-label="Scroll left"><Tri d={TRI.left} /></ScrollArrow>
                  <ScrollTrack $dir="row" $before={59}><ScrollThumb $w="79px" $h="7px" /></ScrollTrack>
                  <ScrollArrow $edge="left" aria-label="Scroll right"><Tri d={TRI.right} /></ScrollArrow>
                </ScrollBar>
              </HScrollRow>
            </Center>

            <Right>
              <SplitV>
                <svg width="6" height="22"><path d="M5 0v10L0 5zM0 12v10l5-5z" fill="#b3b3b3" /></svg>
              </SplitV>
              <RightStack>
                <Panel $grow={357} $fill="#fafafa">
                  <PanelHead><PanelTab>Selection Details</PanelTab></PanelHead>
                  <Details>
                    {DETAILS.map(([k, v], i) => (
                      <React.Fragment key={k}>
                        <DetailLabel htmlFor={`detail-${i}`}>{k}{k === "Thread State:" && <Swatch />}</DetailLabel>
                        <DetailField id={`detail-${i}`} readOnly value={v} />
                      </React.Fragment>
                    ))}
                  </Details>
                </Panel>
                <SplitH>
                  <svg width="24" height="6"><path d="M0 6h11L5.500 0zM12 0h11l-5.500 5z" fill="#b3b3b3" /></svg>
                </SplitH>
                <Panel $grow={260} $fill="#fff">
                  <PanelHead><PanelTab>Call Stack - Timeline</PanelTab></PanelHead>
                  <Stack>
                    {FRAMES.map(([text, color], i) => (
                      <Frame key={text} $color={color} $active={i === 5}>{text}</Frame>
                    ))}
                  </Stack>
                  <ScrollBar $dir="row">
                    <ScrollArrow $edge="right" aria-label="Scroll left"><Tri d={TRI.left} /></ScrollArrow>
                    <ScrollTrack $dir="row" $before={6}><ScrollThumb $w="98%" $h="7px" /></ScrollTrack>
                    <ScrollArrow $edge="left" aria-label="Scroll right"><Tri d={TRI.right} /></ScrollArrow>
                  </ScrollBar>
                </Panel>
              </RightStack>
            </Right>
          </Body>

          <StatusBar>
            {STATUS.map(([label, value], i) => (
              <React.Fragment key={label}>
                {i > 0 && <Divider $h={14} />}
                <StatusItem>{label}<StatusValue>{value}</StatusValue></StatusItem>
              </React.Fragment>
            ))}
          </StatusBar>
        </Client>
      </Window>

      <TaskBar>
        <TaskSide>
          <Logo>
            <svg width="28" height="28"><rect width="28" height="28" fill="#ee1c24" /><rect x="4" y="8" width="20" height="12" rx="6" fill="none" stroke="#fff" strokeWidth="4" /><path d="M23 4l2.500-3L28 4z" fill="#111" /></svg>
          </Logo>
          <Clock>{"Fri Nov  9,  1:20:08 PM"}</Clock>
          <DesktopButton aria-label="Show desktop">
            <svg width="22" height="22"><rect x=".5" y=".5" width="21" height="20" rx="2" fill="#36536f" stroke="#1e3347" /><path d="M3 3.500h6M12 3.500h2M16 3.500h2M12 7.500h2M16 7.500h2M16 11.500h2" stroke="#c6d6e4" strokeWidth="2" /><path d="M2 18.500h18" stroke="#a9bccd" /></svg>
          </DesktopButton>
          <Spacer $w={3} />
          <Grip />
          <Spacer $w={3} />
          <Task><TerminalIcon />Terminal</Task>
          <Task><TerminalIcon />Terminal</Task>
          <Task $active><AppIcon />{"test.1.er  -  Oracle De..."}</Task>
        </TaskSide>
        <TaskSide>
          <svg width="76" height="30">
            {[0, 1, 2].map((c) => [0, 1].map((r) => (
              <rect key={`${c}${r}`} x={c * 25} y={r * 15} width="24" height="14" fill={c === 1 && r === 0 ? "#2f83c0" : "#9b9cae"} />
            )))}
            <path d="M.5.5h8v5h-8zM8.500.5h7v4h-7zM7.500 5.500h9v4h-9z" fill="#fff" stroke="#111" />
            <path d="M25 13.500h24" stroke="#16456b" />
          </svg>
          <Spacer $w={2} />
          <Grip />
          <Spacer $w={5} />
          <svg width="22" height="24"><rect x=".5" y="1.500" width="21" height="20" rx="3" fill="#e6e8ec" stroke="#777" /><rect x="3" y="4" width="16" height="13" fill="#1d4f86" stroke="#123" /><path d="M4 11h3l2-4 2 7 2-6 2 4 3-1" fill="none" stroke="#e7e06a" strokeWidth="1.300" /><path d="M5 22.500h12" stroke="#444" strokeWidth="2" /></svg>
          <Spacer $w={3} />
          <svg width="30" height="30"><rect width="30" height="30" rx="3" fill="#4a4a4a" /><circle cx="15" cy="12" r="10" fill="#e9e9e9" stroke="#8e8e8e" /><path d="M15 4v8l4 5" fill="none" stroke="#555" /><path d="M15 12l-4-1" stroke="#b44" /><path d="M4 25.500h22" stroke="#bbb" /><rect x="18" y="23" width="5" height="5" fill="#e2e2e2" /></svg>
          <Locale>en</Locale>
          <svg width="30" height="30"><path d="M1 2h28l-3 27H4z" fill="#7fb0c6" stroke="#3d6b80" /><path d="M4 4h5v22H6zM21 4h5l-2 22h-3z" fill="#a8cbd9" /><path d="M5 4l6-3 5 2 6-1 3 3-3 6 1 6-4 8-7 2-5-4 2-7-3-5z" fill="#edf4f7" /><path d="M9 7l5 3 6-4M10 13l6 2 4-4M12 20l4-3 4 3M14 5l2 5" fill="none" stroke="#9fb9c5" /></svg>
        </TaskSide>
      </TaskBar>
    </Screen>
  );
}
